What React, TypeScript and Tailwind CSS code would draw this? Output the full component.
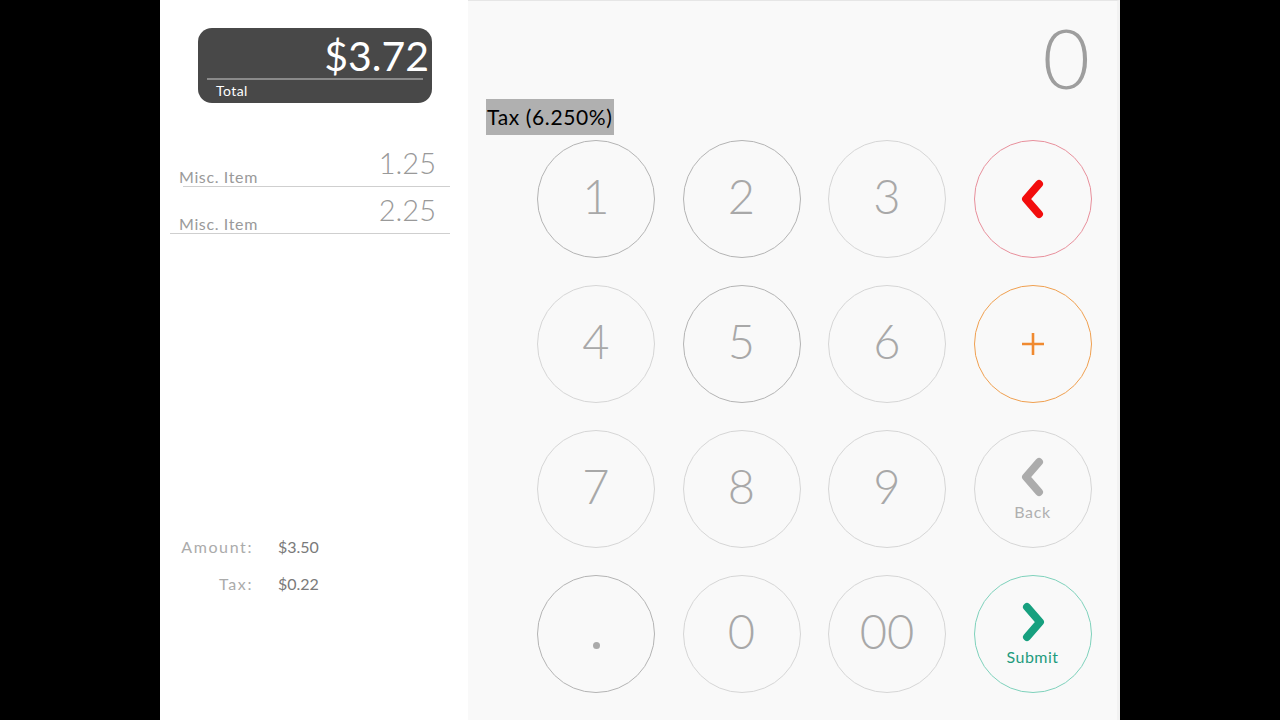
import React from 'react';

type Key = {
  label: string;
  dark?: boolean;
};

const digitKeys: Key[][] = [
  [{ label: '1', dark: true }, { label: '2', dark: true }, { label: '3' }],
  [{ label: '4' }, { label: '5', dark: true }, { label: '6' }],
  [{ label: '7' }, { label: '8' }, { label: '9' }],
  [{ label: '.', dark: true }, { label: '0' }, { label: '00' }],
];

const font = { fontFamily: '"Lato", "Open Sans", sans-serif' };

function Chevron({ dir, color }: { dir: 'left' | 'right'; color: string }) {
  const d = dir === 'left' ? 'M19 5 L6 20 L19 35' : 'M7 5 L20 20 L7 35';
  return (
    <svg width="26" height="40" viewBox="0 0 26 40">
      <path d={d} fill="none" stroke={color} strokeWidth="8" strokeLinecap="round" strokeLinejoin="round" />
    </svg>
  );
}

function DigitKey({ k }: { k: Key }) {
  return (
    <button
      className={`w-[118px] h-[118px] rounded-full border flex items-center justify-center pb-[6px] text-[47px] font-light text-[#a8a8a8] ${
        k.dark ? 'border-[#b4b4b4]' : 'border-[#d6d6d6]'
      }`}
      style={font}
    >
      {k.label === '.' ? <span className="w-[7px] h-[7px] rounded-full bg-[#aaa] mt-[28px]" /> : k.label}
    </button>
  );
}

export default function App() {
  return (
    <div className="w-[1280px] h-[720px] bg-black flex justify-center overflow-hidden" style={font}>
      {/* receipt side */}
      <div className="w-[308px] h-full bg-white flex flex-col">
        <div className="mt-[28px] ml-[38px] w-[234px] h-[75px] rounded-[14px] bg-[#484848] flex flex-col pt-[6px]">
          <div className="text-white text-[41px] leading-[44px] text-right pr-[3px]">$3.72</div>
          <div className="mx-[9px] h-[2px] bg-[#8a8a8a]" />
          <div className="text-white text-[14px] leading-[18px] pl-[18px] mt-[2px] tracking-[0.03em]">Total</div>
        </div>

        <div className="mt-[37px] flex flex-col">
          <div className="relative h-[47px] ml-[23px] mr-[18px] border-b border-[#cfcfcf]">
            <span className="absolute right-[14px] top-[1px] text-[29px] font-light text-[#999]">1.25</span>
            <span className="absolute left-[-4px] bottom-[-3px] text-[16px] tracking-[0.04em] text-[#9a9a9a]">Misc. Item</span>
          </div>
          <div className="relative h-[47px] ml-[10px] mr-[18px] border-b border-[#cfcfcf]">
            <span className="absolute right-[14px] top-[1px] text-[29px] font-light text-[#999]">2.25</span>
            <span className="absolute left-[9px] bottom-[-3px] text-[16px] tracking-[0.04em] text-[#9a9a9a]">Misc. Item</span>
          </div>
        </div>

        <div className="mt-[302px] grid grid-cols-[93px_1fr] gap-x-[25px] gap-y-[15px] text-[16px] leading-[22px]">
          <span className="text-right text-[#ababab] tracking-[0.1em]">Amount:</span>
          <span className="text-[#7a7a7a]">$3.50</span>
          <span className="text-right text-[#ababab] tracking-[0.1em]">Tax:</span>
          <span className="text-[#7a7a7a]">$0.22</span>
        </div>
      </div>

      {/* keypad side */}
      <div className="w-[652px] h-full bg-[#f9f9f9] border-t border-[#e6e6e6] border-r-[3px] border-r-[#f2f2f2] flex flex-col">
        <div className="h-[98px] flex justify-end items-center pr-[27px] pt-[14px]">
          <span className="text-[82px] font-light leading-none text-[#9e9e9e]">0</span>
        </div>
        <div className="pl-[18px]">
          <span className="inline-block bg-[#b0b0b0] text-black text-[21px] leading-[36px] tracking-[0.03em] px-[1px]">Tax (6.250%)</span>
        </div>
        <div className="mt-[5px] ml-[69px] grid grid-cols-[repeat(4,118px)] gap-x-[27.5px] gap-y-[27px]">
          {digitKeys.map((row, i) => (
            <React.Fragment key={i}>
              {row.map((k) => (
                <DigitKey key={k.label} k={k} />
              ))}
              {i === 0 && (
                <button className="w-[118px] h-[118px] rounded-full border border-[#e8909c] flex items-center justify-center">
                  <Chevron dir="left" color="#f20d0d" />
                </button>
              )}
              {i === 1 && (
                <button className="w-[118px] h-[118px] rounded-full border-[1.5px] border-[#f0a050] flex items-center justify-center">
                  <svg width="26" height="26" viewBox="0 0 26 26">
                    <path d="M13 2 V24 M2 13 H24" stroke="#f08a30" strokeWidth="2.6" strokeLinecap="butt" />
                  </svg>
                </button>
              )}
              {i === 2 && (
                <button className="w-[118px] h-[118px] rounded-full border border-[#d6d6d6] flex flex-col items-center justify-center pt-[3px]">
                  <Chevron dir="left" color="#acacac" />
                  <span className="text-[16px] text-[#b0b0b0] mt-[3px] tracking-[0.04em]">Back</span>
                </button>
              )}
              {i === 3 && (
                <button className="w-[118px] h-[118px] rounded-full border border-[#7fd2bc] flex flex-col items-center justify-center pt-[3px]">
                  <Chevron dir="right" color="#17a07f" />
                  <span className="text-[16px] text-[#1f9c7e] mt-[3px] tracking-[0.03em]">Submit</span>
                </button>
              )}
            </React.Fragment>
          ))}
        </div>
      </div>
    </div>
  );
}
